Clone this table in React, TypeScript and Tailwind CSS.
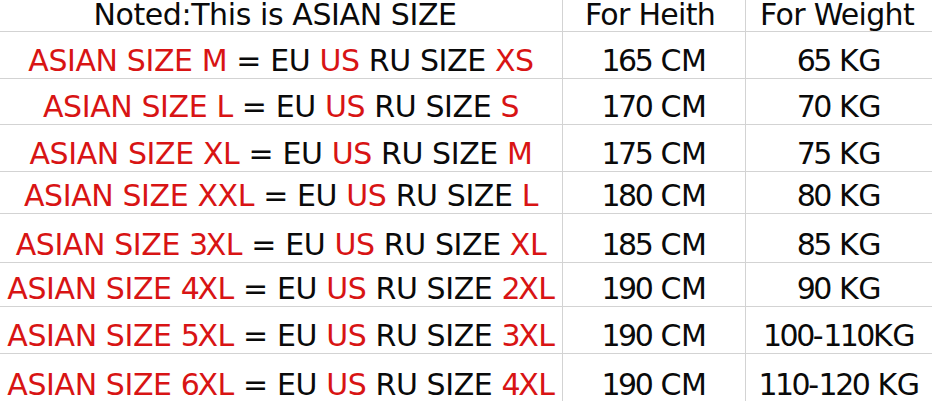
import React from "react";

type Seg = { t: string; red?: boolean };

function Txt({ s }: { s: string }) {
  const parts = s.split(/(\d+)/).filter((p) => p.length > 0);
  return (
    <>
      {parts.map((p, i) =>
        /^\d+$/.test(p) ? (
          <span key={i} className="tracking-[-2.5px]">
            {p}
          </span>
        ) : (
          <span key={i}>{p}</span>
        )
      )}
    </>
  );
}

const rows: { left: Seg[]; h: string; w: string; height: string; last?: boolean }[] = [
  {
    left: [{ t: "ASIAN SIZE M", red: true }, { t: " = EU " }, { t: "US", red: true }, { t: " RU SIZE " }, { t: "XS", red: true }],
    h: "165 CM",
    w: "65 KG",
    height: "h-[47px]",
  },
  {
    left: [{ t: "ASIAN SIZE L", red: true }, { t: " = EU " }, { t: "US", red: true }, { t: " RU SIZE " }, { t: "S", red: true }],
    h: "170 CM",
    w: "70 KG",
    height: "h-[46px]",
  },
  {
    left: [{ t: "ASIAN SIZE XL", red: true }, { t: " = EU " }, { t: "US", red: true }, { t: " RU SIZE " }, { t: "M", red: true }],
    h: "175 CM",
    w: "75 KG",
    height: "h-[47px]",
  },
  {
    left: [{ t: "ASIAN SIZE XXL", red: true }, { t: " = EU " }, { t: "US", red: true }, { t: " RU SIZE " }, { t: "L", red: true }],
    h: "180 CM",
    w: "80 KG",
    height: "h-[42px]",
  },
  {
    left: [{ t: "ASIAN SIZE 3XL", red: true }, { t: " = EU " }, { t: "US", red: true }, { t: " RU SIZE " }, { t: "XL", red: true }],
    h: "185 CM",
    w: "85 KG",
    height: "h-[49px]",
  },
  {
    left: [{ t: "ASIAN SIZE 4XL", red: true }, { t: " = EU " }, { t: "US", red: true }, { t: " RU SIZE " }, { t: "2XL", red: true }],
    h: "190 CM",
    w: "90 KG",
    height: "h-[44px]",
  },
  {
    left: [{ t: "ASIAN SIZE 5XL", red: true }, { t: " = EU " }, { t: "US", red: true }, { t: " RU SIZE " }, { t: "3XL", red: true }],
    h: "190 CM",
    w: "100-110KG",
    height: "h-[47px]",
  },
  {
    left: [{ t: "ASIAN SIZE 6XL", red: true }, { t: " = EU " }, { t: "US", red: true }, { t: " RU SIZE " }, { t: "4XL", red: true }],
    h: "190 CM",
    w: "110-120 KG",
    height: "h-[48px]",
    last: true,
  },
];

const cell = "flex items-end justify-center whitespace-pre leading-[30px]";

export default function App() {
  return (
    <div
      className="w-[932px] h-[401px] overflow-hidden bg-white text-[30px] tracking-[-0.4px] text-[#0a0a0a]"
      style={{ fontFamily: '"DejaVu Sans", Verdana, sans-serif' }}
    >
      <div className="grid grid-cols-[563px_183px_186px] h-[32px] border-b border-[#d3d3d3]">
        <div className={`${cell} pb-[3px] pr-3 border-r border-[#d3d3d3]`}>Noted:This is ASIAN SIZE</div>
        <div className={`${cell} pb-[3px] pr-2 border-r border-[#d3d3d3] tracking-[-0.7px]`}>For Heith</div>
        <div className={`${cell} pb-[3px] pr-1 tracking-[-0.7px]`}>For Weight</div>
      </div>
      {rows.map((r, i) => (
        <div
          key={i}
          className={`grid grid-cols-[563px_183px_186px] ${r.height} ${r.last ? "" : "border-b border-[#d3d3d3]"}`}
        >
          <div className={`${cell} pb-[2px] border-r border-[#d3d3d3]`}>
            {r.left.map((s, j) => (
              <span key={j} className={s.red ? "text-[#d81414]" : ""}>
                <Txt s={s.t} />
              </span>
            ))}
          </div>
          <div className={`${cell} pb-[2px] border-r border-[#d3d3d3]`}>
            <Txt s={r.h} />
          </div>
          <div className={`${cell} pb-[2px]`}>
            <Txt s={r.w} />
          </div>
        </div>
      ))}
    </div>
  );
}
